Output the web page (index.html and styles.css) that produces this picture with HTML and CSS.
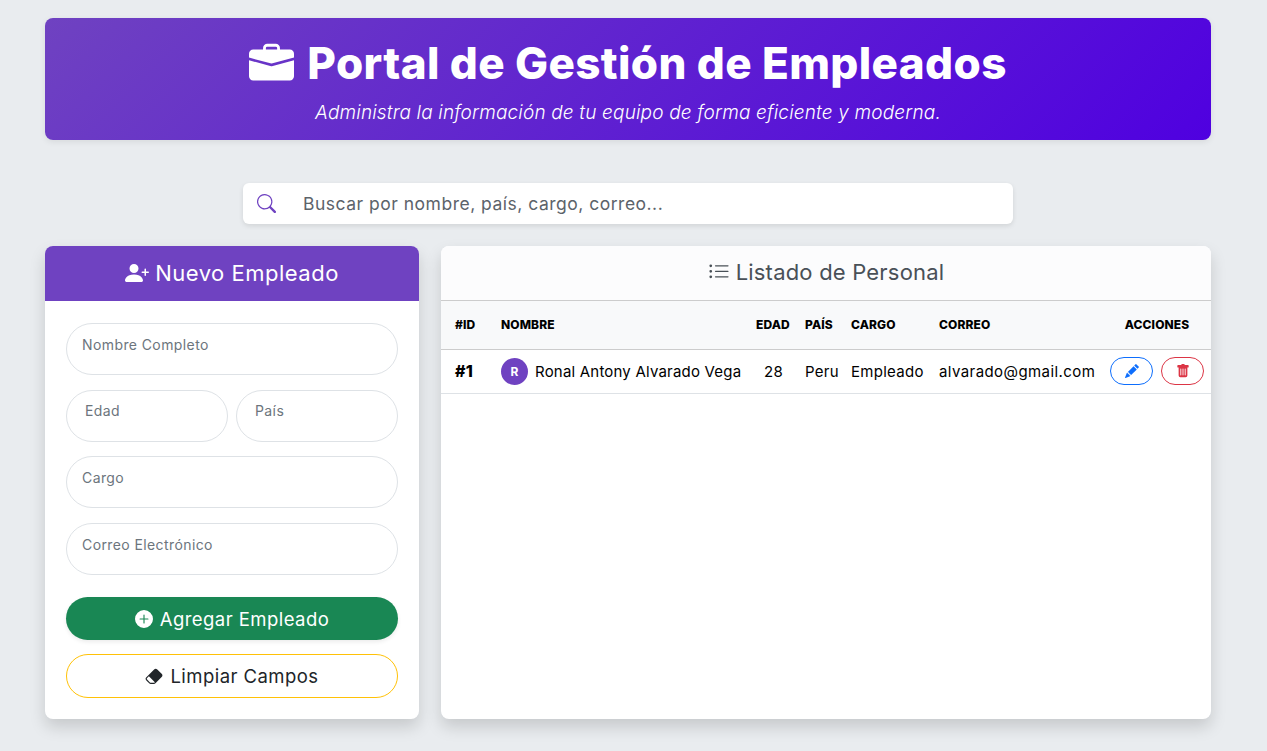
FILE: index.html
```html
<!DOCTYPE html>
<html lang="es">
  <head>
    <meta charset="UTF-8" />
    <title>Portal de Gestión de Empleados</title>
    <link rel="stylesheet" href="styles.css">
  </head>
  <body>
    <header class="banner">
      <h1>
        <svg class="banner-icon" viewBox="0 0 16 16" fill="currentColor"><path d="M6.5 1A1.5 1.5 0 0 0 5 2.5V3H1.5A1.5 1.5 0 0 0 0 4.5v1.384l7.614 2.03a1.5 1.5 0 0 0 .772 0L16 5.884V4.5A1.5 1.5 0 0 0 14.5 3H11v-.5A1.5 1.5 0 0 0 9.5 1h-3zm0 1h3a.5.5 0 0 1 .5.5V3H6v-.5a.5.5 0 0 1 .5-.5z"/><path d="M0 12.5A1.5 1.5 0 0 0 1.5 14h13a1.5 1.5 0 0 0 1.5-1.5V6.85L8.129 8.947a.5.5 0 0 1-.258 0L0 6.85v5.65z"/></svg>
        Portal de Gestión de Empleados
      </h1>
      <p>Administra la información de tu equipo de forma eficiente y moderna.</p>
    </header>

    <div class="search">
      <svg class="search-icon" viewBox="0 0 16 16" fill="currentColor"><path d="M11.742 10.344a6.5 6.5 0 1 0-1.397 1.398h-.001c.03.04.062.078.098.115l3.85 3.85a1 1 0 0 0 1.415-1.414l-3.85-3.85a1.007 1.007 0 0 0-.115-.1zM12 6.5a5.5 5.5 0 1 1-11 0 5.5 5.5 0 0 1 11 0z"/></svg>
      <span>Buscar por nombre, país, cargo, correo...</span>
    </div>

    <main class="layout">
      <section class="card form-card">
        <h2 class="form-title">
          <svg class="title-icon" viewBox="0 0 16 16" fill="currentColor"><path d="M1 14s-1 0-1-1 1-4 6-4 6 3 6 4-1 1-1 1H1zm5-6a3 3 0 1 0 0-6 3 3 0 0 0 0 6z"/><path fill-rule="evenodd" d="M13.5 5a.5.5 0 0 1 .5.5V7h1.5a.5.5 0 0 1 0 1H14v1.5a.5.5 0 0 1-1 0V8h-1.5a.5.5 0 0 1 0-1H13V5.5a.5.5 0 0 1 .5-.5z"/></svg>
          Nuevo Empleado
        </h2>
        <form class="form-body">
          <div class="field">Nombre Completo</div>
          <div class="field-row">
            <div class="field">Edad</div>
            <div class="field">País</div>
          </div>
          <div class="field">Cargo</div>
          <div class="field">Correo Electrónico</div>
          <button type="button" class="btn btn-add">
            <svg class="btn-icon" viewBox="0 0 16 16" fill="currentColor"><path d="M16 8A8 8 0 1 1 0 8a8 8 0 0 1 16 0zM8.5 4.5a.5.5 0 0 0-1 0v3h-3a.5.5 0 0 0 0 1h3v3a.5.5 0 0 0 1 0v-3h3a.5.5 0 0 0 0-1h-3v-3z"/></svg>
            Agregar Empleado
          </button>
          <button type="button" class="btn btn-clear">
            <svg class="btn-icon" viewBox="0 0 16 16" fill="currentColor"><path d="M8.086 2.207a2 2 0 0 1 2.828 0l3.879 3.879a2 2 0 0 1 0 2.828l-5.5 5.5A2 2 0 0 1 7.879 15H5.12a2 2 0 0 1-1.414-.586l-2.5-2.5a2 2 0 0 1 0-2.828l6.879-6.879zm.66 11.34L3.453 8.254 1.914 9.793a1 1 0 0 0 0 1.414l2.5 2.5a1 1 0 0 0 .707.293H7.88a1 1 0 0 0 .707-.293l.16-.16z"/></svg>
            Limpiar Campos
          </button>
        </form>
      </section>

      <section class="card list-card">
        <h2 class="list-title">
          <svg class="list-icon" viewBox="0 0 16 16" fill="currentColor"><path fill-rule="evenodd" d="M5 11.5a.5.5 0 0 1 .5-.5h9a.5.5 0 0 1 0 1h-9a.5.5 0 0 1-.5-.5zm0-4a.5.5 0 0 1 .5-.5h9a.5.5 0 0 1 0 1h-9a.5.5 0 0 1-.5-.5zm0-4a.5.5 0 0 1 .5-.5h9a.5.5 0 0 1 0 1h-9a.5.5 0 0 1-.5-.5zm-3 1a1 1 0 1 0 0-2 1 1 0 0 0 0 2zm0 4a1 1 0 1 0 0-2 1 1 0 0 0 0 2zm0 4a1 1 0 1 0 0-2 1 1 0 0 0 0 2z"/></svg>
          Listado de Personal
        </h2>
        <table class="staff">
          <colgroup>
            <col class="col-id" /><col class="col-name" /><col class="col-age" /><col class="col-country" /><col class="col-job" /><col class="col-mail" /><col class="col-actions" />
          </colgroup>
          <thead>
            <tr>
              <th>#ID</th>
              <th>Nombre</th>
              <th>Edad</th>
              <th>País</th>
              <th>Cargo</th>
              <th>Correo</th>
              <th class="center">Acciones</th>
            </tr>
          </thead>
          <tbody>
            <tr>
              <td class="row-id">#1</td>
              <td><div class="person"><span class="avatar">R</span>Ronal Antony Alvarado Vega</div></td>
              <td class="center">28</td>
              <td>Peru</td>
              <td>Empleado</td>
              <td class="mail">alvarado@gmail.com</td>
              <td>
                <div class="actions">
                  <button type="button" class="action action-edit">
                    <svg viewBox="0 0 16 16" fill="currentColor"><path d="M12.854.146a.5.5 0 0 0-.707 0L10.5 1.793 14.207 5.5l1.647-1.646a.5.5 0 0 0 0-.708l-3-3zm.646 6.061L9.793 2.5 3.293 9H3.5a.5.5 0 0 1 .5.5v.5h.5a.5.5 0 0 1 .5.5v.5h.5a.5.5 0 0 1 .5.5v.5h.5a.5.5 0 0 1 .5.5v.207l6.5-6.5zm-7.468 7.468A.5.5 0 0 1 6 13.5V13h-.5a.5.5 0 0 1-.5-.5V12h-.5a.5.5 0 0 1-.5-.5V11h-.5a.5.5 0 0 1-.5-.5V10h-.5a.499.499 0 0 1-.175-.032l-.179.178a.5.5 0 0 0-.11.168l-2 5a.5.5 0 0 0 .65.65l5-2a.5.5 0 0 0 .168-.11l.178-.178z"/></svg>
                  </button>
                  <button type="button" class="action action-delete">
                    <svg viewBox="0 0 16 16" fill="currentColor"><path d="M2.5 1a1 1 0 0 0-1 1v1a1 1 0 0 0 1 1H3v9a2 2 0 0 0 2 2h6a2 2 0 0 0 2-2V4h.5a1 1 0 0 0 1-1V2a1 1 0 0 0-1-1H10a1 1 0 0 0-1-1H7a1 1 0 0 0-1 1H2.5zm3 4a.5.5 0 0 1 .5.5v7a.5.5 0 0 1-1 0v-7a.5.5 0 0 1 .5-.5zM8 5a.5.5 0 0 1 .5.5v7a.5.5 0 0 1-1 0v-7A.5.5 0 0 1 8 5zm3 .5v7a.5.5 0 0 1-1 0v-7a.5.5 0 0 1 1 0z"/></svg>
                  </button>
                </div>
              </td>
            </tr>
          </tbody>
        </table>
      </section>
    </main>
  </body>
</html>
```

FILE: styles.css
```css
* {
  box-sizing: border-box;
  margin: 0;
  padding: 0;
}

body {
  height: 751px;
  overflow: hidden;
  padding: 18px 56px 0 45px;
  background-color: #e9ecef;
  color: #212529;
  font-family: "Inter", "Open Sans", sans-serif;
}

button {
  font-family: inherit;
  cursor: pointer;
}

.banner {
  height: 122px;
  padding-top: 17px;
  border-radius: 8px;
  background: linear-gradient(135deg, #6f42c1, #4f00e0);
  color: #fff;
  text-align: center;
  box-shadow: 0 2px 6px rgba(0, 0, 0, 0.08);
}

.banner h1 {
  display: flex;
  justify-content: center;
  align-items: center;
  gap: 13px;
  height: 56px;
  font-size: 44px;
  font-weight: 800;
  letter-spacing: 0.37px;
}

.banner-icon {
  width: 45px;
  height: 45px;
}

.banner p {
  margin-top: 10px;
  font-size: 19px;
  font-weight: 300;
  font-style: italic;
  letter-spacing: 0.17px;
}

.search {
  display: flex;
  align-items: center;
  gap: 27px;
  width: 770px;
  height: 41px;
  margin: 43px 0 22px 198px;
  padding-left: 14px;
  border-radius: 6px;
  background: #fff;
  color: #5c636a;
  font-size: 17.5px;
  letter-spacing: 0.5px;
  box-shadow: 0 2px 5px rgba(0, 0, 0, 0.1);
}

.search-icon {
  width: 19px;
  height: 19px;
  color: #6f42c1;
}

.layout {
  display: flex;
  gap: 22px;
  height: 473px;
}

.card {
  border-radius: 8px;
  overflow: hidden;
  background: #fff;
  box-shadow: 0 8px 16px rgba(0, 0, 0, 0.15);
}

.form-card {
  width: 374px;
}

.list-card {
  flex: 1;
}

.title-icon {
  width: 24px;
  height: 24px;
}

.list-icon {
  width: 22px;
  height: 22px;
}

.form-title,
.list-title {
  display: flex;
  justify-content: center;
  align-items: center;
  gap: 6px;
  height: 55px;
  padding-bottom: 2px;
  font-size: 22px;
  font-weight: 400;
}

.form-title {
  background: #6f42c1;
  color: #fff;
  letter-spacing: 0.5px;
}

.list-title {
  background: #fcfcfd;
  color: #495057;
  border-bottom: 1px solid #ccc;
  letter-spacing: 0.2px;
}

.form-body {
  display: flex;
  flex-direction: column;
  padding: 22px 21px;
}

.field {
  height: 52px;
  margin-bottom: 14.5px;
  padding: 12px 15px 0;
  border: 1px solid #dee2e6;
  border-radius: 26px;
  color: #6c757d;
  font-size: 14px;
  letter-spacing: 0.4px;
}

.field-row {
  display: grid;
  grid-template-columns: 1fr 1fr;
  gap: 8px;
}

.field-row .field {
  padding-left: 18px;
  padding-top: 11px;
}

.btn {
  display: flex;
  justify-content: center;
  align-items: center;
  gap: 7px;
  border-radius: 22px;
  font-size: 18.5px;
  letter-spacing: 0.45px;
  background: #fff;
}

.btn-icon {
  width: 18px;
  height: 18px;
}

.btn-add {
  height: 43px;
  margin-top: 8px;
  border: none;
  background: #198754;
  color: #fff;
  box-shadow: 0 2px 4px rgba(0, 0, 0, 0.08);
}

.btn-clear {
  height: 44px;
  margin-top: 14px;
  border: 1px solid #ffc107;
  color: #212529;
}

.staff {
  width: 100%;
  table-layout: fixed;
  border-collapse: collapse;
  font-size: 15px;
  letter-spacing: 0.28px;
  color: #000;
}

.col-id { width: 53px; }
.col-name { width: 255px; }
.col-age { width: 49px; }
.col-country { width: 46px; }
.col-job { width: 88px; }
.col-mail { width: 171px; }

.staff th {
  height: 48px;
  padding: 0 7px;
  background: #f8f9fa;
  border-bottom: 1px solid #ccc;
  font-size: 12px;
  font-weight: 800;
  letter-spacing: 0.1px;
  text-align: left;
  text-transform: uppercase;
  white-space: nowrap;
}

.staff td {
  height: 44px;
  padding: 0 7px;
  border-bottom: 1px solid #dee2e6;
  white-space: nowrap;
}

.staff th:first-child,
.staff td:first-child {
  padding-left: 14px;
}

.staff .center {
  text-align: center;
}

.staff .row-id {
  font-weight: 800;
  font-size: 16px;
}

.staff .mail {
  letter-spacing: 0.42px;
}

.person {
  display: flex;
  align-items: center;
  gap: 7px;
  letter-spacing: 0.2px;
}

.avatar {
  display: flex;
  flex: none;
  justify-content: center;
  align-items: center;
  width: 27px;
  height: 27px;
  border-radius: 50%;
  background: #6f42c1;
  color: #fff;
  font-size: 12px;
  font-weight: 700;
}

.actions {
  display: flex;
  gap: 8px;
}

.action {
  display: flex;
  justify-content: center;
  align-items: center;
  width: 43px;
  height: 28px;
  border-radius: 14px;
  background: #fff;
}

.action svg {
  width: 14px;
  height: 14px;
}

.action-edit {
  border: 1px solid #0d6efd;
  color: #0d6efd;
}

.action-delete {
  border: 1px solid #dc3545;
  color: #dc3545;
}
```
